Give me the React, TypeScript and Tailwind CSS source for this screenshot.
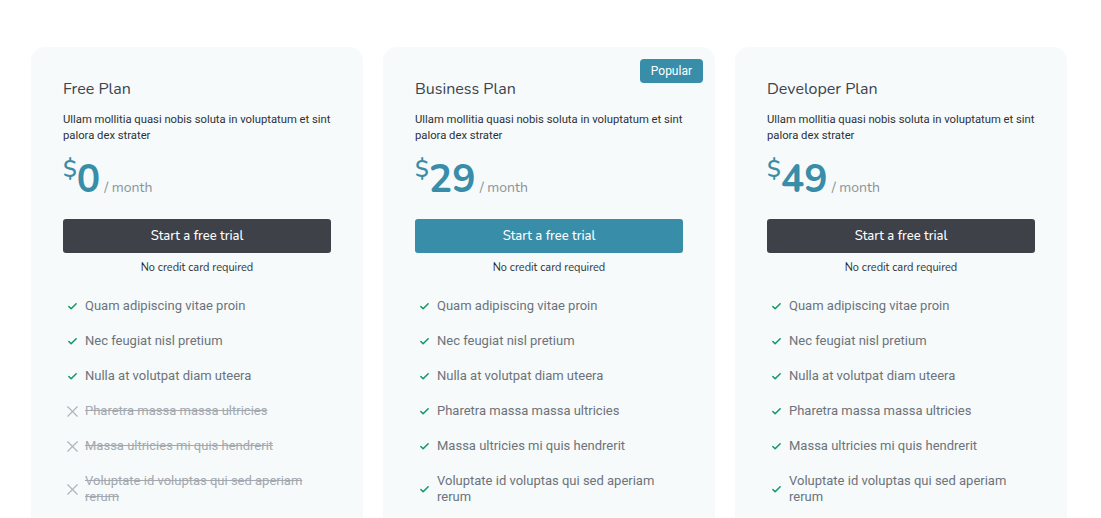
import { Check, X } from "lucide-react";

interface Feature {
  text: string;
  on: boolean;
}

interface Plan {
  name: string;
  price: number;
  popular?: boolean;
  features: Feature[];
}

const names = [
  "Quam adipiscing vitae proin",
  "Nec feugiat nisl pretium",
  "Nulla at volutpat diam uteera",
  "Pharetra massa massa ultricies",
  "Massa ultricies mi quis hendrerit",
  "Voluptate id voluptas qui sed aperiam rerum",
];

const plans: Plan[] = [
  { name: "Free Plan", price: 0, features: names.map((t, i) => ({ text: t, on: i < 3 })) },
  { name: "Business Plan", price: 29, popular: true, features: names.map((t) => ({ text: t, on: true })) },
  { name: "Developer Plan", price: 49, features: names.map((t) => ({ text: t, on: true })) },
];

const heading = "font-['Nunito','Noto_Sans',sans-serif]";
const body = "font-['Roboto','Liberation_Sans',sans-serif]";

function PlanCard({ plan }: { plan: Plan }) {
  return (
    <div className="relative w-[332px] shrink-0 rounded-[14px] bg-[#f6fafb] px-8 pt-[32px] pb-10">
      {plan.popular && (
        <span className={`absolute top-3 right-3 rounded-[4px] bg-[#388da8] px-[11px] py-[4px] text-[12px] leading-4 text-white ${body}`}>
          Popular
        </span>
      )}
      <h3 className={`text-[16px] leading-5 text-[#3c444d] ${heading}`}>{plan.name}</h3>
      <p className={`mt-[13px] text-[11.25px] leading-4 text-[#2d3136] ${body}`}>
        Ullam mollitia quasi nobis soluta in voluptatum et sint palora dex strater
      </p>

      {/* price */}
      <div className={`mt-[14px] flex h-[44px] items-end ${heading}`}>
        <span className="self-start text-[23px] leading-6 font-semibold text-[#388da8]">$</span>
        <span className="text-[39px] leading-[44px] font-bold text-[#388da8]">{plan.price}</span>
        <span className="mb-[4px] ml-1 text-[14px] leading-5 text-[#8b949a]">/ month</span>
      </div>

      <button
        className={`mt-[17px] h-[34px] w-full rounded-[3px] pt-px text-[13px] font-medium text-white ${heading} ${
          plan.popular ? "bg-[#388da8]" : "bg-[#3e4148]"
        }`}
      >
        Start a free trial
      </button>
      <div className={`mt-[7px] text-center text-[11px] leading-4 text-[#2d3136] ${heading}`}>
        No credit card required
      </div>

      {/* features */}
      <ul className={`mt-[22px] flex flex-col gap-[19px] ${body}`}>
        {plan.features.map((f) => (
          <li key={f.text} className="flex items-center gap-[7px] pl-[4px] pr-[20px]">
            <span className="flex h-4 w-[11px] shrink-0 items-center justify-center">
              {f.on ? (
                <Check className="h-[11px] w-[11px] shrink-0 text-[#129a62]" strokeWidth={3.4} />
              ) : (
                <X className="h-[19px] w-[19px] shrink-0 text-[#adb3b8]" strokeWidth={1.4} />
              )}
            </span>
            <span
              className={`text-[13px] leading-4 ${
                f.on ? "text-[#6c737a]" : "text-[#a3a9ae] line-through"
              }`}
            >
              {f.text}
            </span>
          </li>
        ))}
      </ul>
    </div>
  );
}

export default function App() {
  return (
    <div className="min-h-screen bg-white pt-[47px] pl-[31px]">
      <div className="flex gap-5">
        {plans.map((p) => (
          <PlanCard key={p.name} plan={p} />
        ))}
      </div>
    </div>
  );
}
